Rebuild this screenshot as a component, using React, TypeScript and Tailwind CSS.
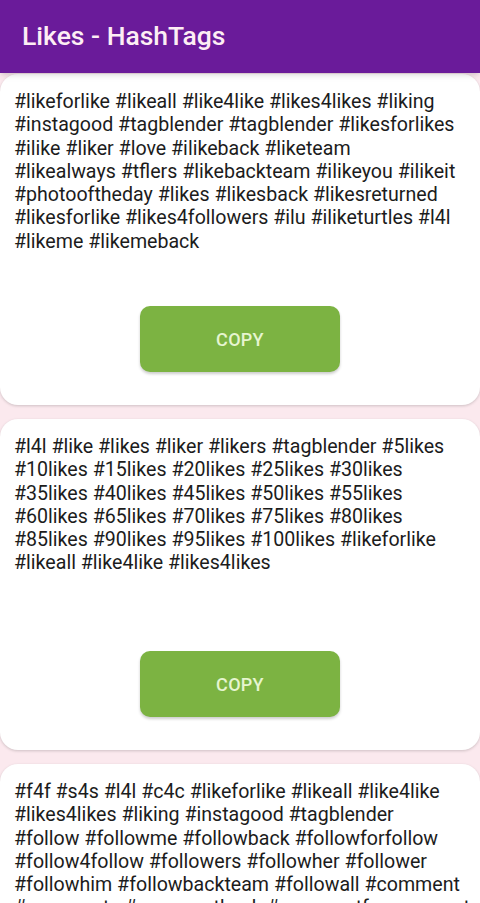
import React from "react";

const cards: string[][] = [
  [
    "#likeforlike #likeall #like4like #likes4likes #liking",
    "#instagood #tagblender #tagblender #likesforlikes",
    "#ilike #liker #love #ilikeback #liketeam",
    "#likealways #tflers #likebackteam #ilikeyou #ilikeit",
    "#photooftheday #likes #likesback #likesreturned",
    "#likesforlike #likes4followers #ilu #iliketurtles #l4l",
    "#likeme #likemeback",
  ],
  [
    "#l4l #like #likes #liker #likers #tagblender #5likes",
    "#10likes #15likes #20likes #25likes #30likes",
    "#35likes #40likes #45likes #50likes #55likes",
    "#60likes #65likes #70likes #75likes #80likes",
    "#85likes #90likes #95likes #100likes #likeforlike",
    "#likeall #like4like #likes4likes",
  ],
  [
    "#f4f #s4s #l4l #c4c #likeforlike #likeall #like4like",
    "#likes4likes #liking #instagood #tagblender",
    "#follow #followme #followback #followforfollow",
    "#follow4follow #followers #followher #follower",
    "#followhim #followbackteam #followall #comment",
    "#comments #commentback #commentforcomment",
  ],
];

export default function App() {
  return (
    <div
      className="w-[480px] h-[903px] overflow-hidden bg-[#fbe9ee] flex flex-col"
      style={{ fontFamily: "Roboto, 'Noto Sans', sans-serif" }}
    >
      <div className="h-[73px] shrink-0 bg-[#6a1b9a] flex items-center pl-[22px] shadow-md z-10">
        <span className="text-[26.5px] font-medium text-[#fdeef4] -mt-[1px]">
          Likes - HashTags
        </span>
      </div>
      <div className="flex flex-col gap-[14px] pt-[1px]">
        {cards.map((lines, i) => (
          <div
            key={i}
            className="bg-white rounded-[18px] shadow-[0_1px_3px_rgba(0,0,0,0.18)] flex flex-col shrink-0"
          >
            <div className="h-[232px] pt-[16px] px-[14px] text-[19.6px] leading-[23.3px] text-[#1c1c1c]">
              {lines.map((l, j) => (
                <div key={j} className="whitespace-nowrap">
                  {l}
                </div>
              ))}
            </div>
            <div className="flex justify-center pb-[33px]">
              <button className="w-[200px] h-[66px] rounded-[10px] bg-[#7cb342] text-[#e6f5d0] text-[18px] font-medium tracking-[0.3px] shadow-[0_2px_3px_rgba(0,0,0,0.2)]">
                COPY
              </button>
            </div>
          </div>
        ))}
      </div>
    </div>
  );
}
